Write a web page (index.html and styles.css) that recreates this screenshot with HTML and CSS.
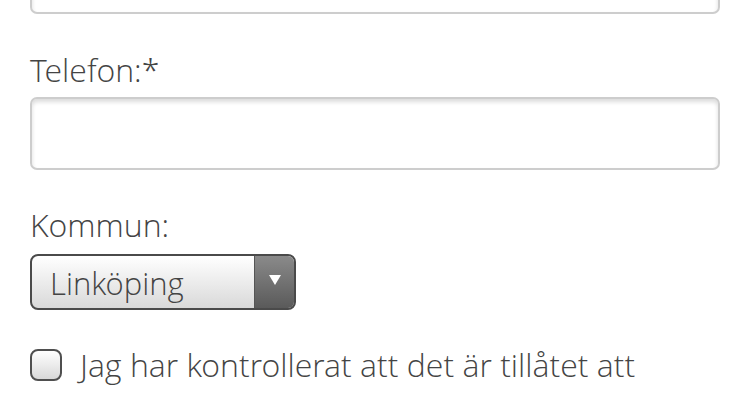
FILE: index.html
```html
<!DOCTYPE html>
<html lang="sv">
<head>
<meta charset="utf-8">
<link rel="stylesheet" href="styles.css">
</head>
<body>
<form class="form">
  <div class="field field-first">
    <input class="text-input" type="text">
  </div>
  <div class="field field-phone">
    <label class="label">Telefon:*</label>
    <input class="text-input" type="text">
  </div>
  <div class="field field-town">
    <label class="label label-town">Kommun:</label>
    <div class="select">
      <span class="select-value">Linköping</span>
      <span class="select-arrow">
        <svg width="12" height="10" viewBox="0 0 12 10"><path d="M0 0H12L6 10Z" fill="#fff"/></svg>
      </span>
    </div>
  </div>
  <div class="check-row">
    <span class="checkbox"></span>
    <span class="check-text">Jag har kontrollerat att det är tillåtet att</span>
  </div>
</form>
</body>
</html>
```
FILE: styles.css
```css
html, body {
  margin: 0;
  padding: 0;
  background: #fff;
}
body {
  font-family: "Open Sans Light", "Open Sans", "Liberation Sans", sans-serif;
  font-weight: 300;
  color: #444;
  width: 750px;
  height: 400px;
  overflow: hidden;
}
.form {
  margin-top: -59px;
  padding: 0 30px;
  display: flex;
  flex-direction: column;
}
.field {
  display: flex;
  flex-direction: column;
}
.field-first {
  margin-bottom: 34px;
}
.field-phone {
  margin-bottom: 33px;
}
.label {
  font-size: 32px;
  line-height: 44px;
  margin-bottom: 5px;
}
.label-town {
  margin-bottom: 7px;
}
.text-input {
  box-sizing: border-box;
  width: 690px;
  height: 73px;
  border: 2px solid #cdcdcd;
  border-radius: 7px;
  background: #fff;
  box-shadow: inset 0 3px 4px rgba(0, 0, 0, 0.14);
  margin: 0;
  padding: 0 16px;
  font: inherit;
  outline: none;
}
.select {
  box-sizing: border-box;
  width: 266px;
  height: 56px;
  border: 2px solid #4a4a4a;
  border-radius: 8px;
  background: linear-gradient(#ffffff, #d9d9d9);
  display: flex;
  align-items: center;
  overflow: hidden;
}
.select-value {
  flex: 1;
  font-size: 31px;
  padding-left: 18px;
  line-height: 40px;
  margin-top: 2px;
}
.select-arrow {
  width: 39px;
  align-self: stretch;
  background: linear-gradient(#8a8a8a, #5a5a5a);
  border-left: 1px solid #555;
  display: flex;
  align-items: center;
  justify-content: center;
}
.select-arrow svg {
  display: block;
  margin-top: -4px;
}
.check-row {
  display: flex;
  align-items: center;
  height: 44px;
  margin-top: 33px;
}
.checkbox {
  box-sizing: border-box;
  width: 32px;
  height: 32px;
  border: 2px solid #4f4f4f;
  border-radius: 8px;
  background: linear-gradient(#ffffff, #d8d8d8);
  flex: none;
}
.check-text {
  font-size: 32px;
  line-height: 44px;
  margin-left: 18px;
}
```
